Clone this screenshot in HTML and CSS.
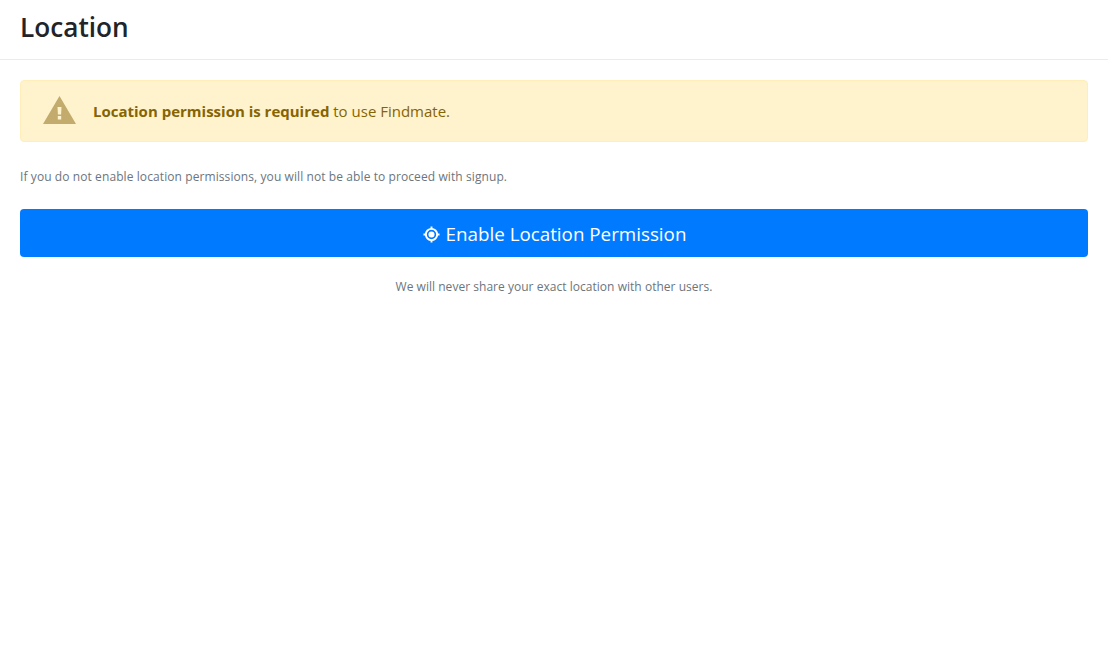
FILE: index.html
```html
<!DOCTYPE html>
<html lang="en">
<head>
<meta charset="utf-8">
<title>Location</title>
<link rel="stylesheet" href="styles.css">
</head>
<body>
<header class="page-header"><h1 class="page-title">Location</h1></header>
<main class="content">
  <div class="alert">
    <svg class="alert-icon" viewBox="0 0 33 28" aria-hidden="true"><path fill-rule="evenodd" d="M16.500 0L33 28H0ZM14.500 11l.4 7.500h3.200l.4 -7.500ZM14.800 20v3.500h3.400v-3.500Z"/></svg>
    <p class="alert-text"><strong>Location permission is required</strong> to use Findmate.</p>
  </div>
  <p class="hint">If you do not enable location permissions, you will not be able to proceed with signup.</p>
  <button class="primary-btn" type="button">
    <svg class="btn-icon" viewBox="0 0 18 18" aria-hidden="true"><circle cx="9" cy="9" r="6" fill="none" stroke="#fff" stroke-width="2"/><circle cx="9" cy="9" r="3.200" fill="#fff"/><path d="M9 0.500v3M9 14.500v3M0.500 9h3M14.500 9h3" stroke="#fff" stroke-width="2"/></svg>
    <span>Enable Location Permission</span>
  </button>
  <p class="note">We will never share your exact location with other users.</p>
</main>
</body>
</html>
```
FILE: styles.css
```css
* { box-sizing: border-box; }
html, body { margin: 0; padding: 0; background: #fff; }
body { font-family: "Open Sans", "Noto Sans", "Liberation Sans", sans-serif; color: #212529; }
.page-header { height: 60px; padding: 0 20px; border-bottom: 1px solid #e9ecef; display: flex; align-items: center; }
.page-title { margin: 0 0 4px; font-size: 26.200px; font-weight: 600; line-height: 1.2; }
.content { padding: 20px 20px 0; }
.alert { height: 62px; display: flex; align-items: center; padding: 0 22px; background: #fff3cd; border: 1px solid #ffeeba; border-radius: 4px; color: #856404; }
.alert-icon { width: 33px; height: 28px; margin-bottom: 2px; fill: #c2ab6c; flex: none; margin-right: 17px; }
.alert-text { margin: 0; font-size: 15px; line-height: 22px; }
.alert-text strong { font-weight: 700; }
.hint { margin: 26px 0 0; font-size: 12px; line-height: 17px; letter-spacing: .09px; color: #6c757d; }
.primary-btn { width: 100%; height: 48px; margin-top: 24px; padding: 2px 0 0 1px; display: flex; align-items: center; justify-content: center; gap: 6px; border: 0; border-radius: 4px; background: #007bff; color: #fff; font: inherit; font-size: 18.800px; }
.btn-icon { width: 17px; height: 17px; flex: none; }
.note { margin: 21px 0 0; font-size: 12px; line-height: 17px; letter-spacing: .03px; color: #6c757d; text-align: center; }
```
